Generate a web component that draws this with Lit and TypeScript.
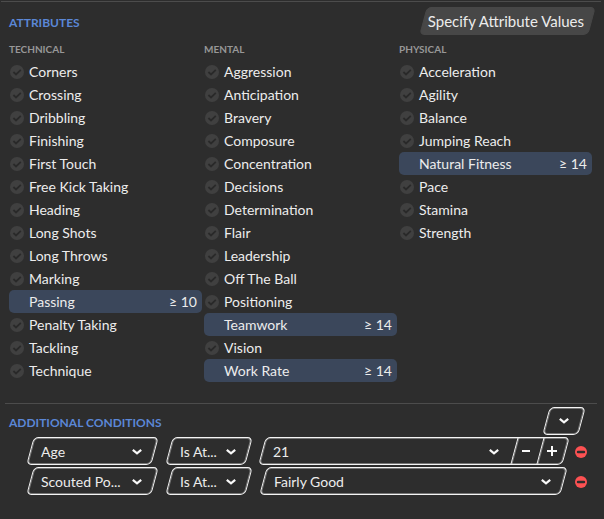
import { LitElement, html, css, svg } from "lit";
import { customElement, property } from "lit/decorators.js";
import { classMap } from "lit/directives/class-map.js";

interface Attribute {
  name: string;
  min?: number;
}

interface Group {
  title: string;
  items: Attribute[];
}

interface Condition {
  field: string;
  operator: string;
  value: string;
  stepper: boolean;
}

const list = (names: string[], picked: Record<string, number> = {}): Attribute[] =>
  names.map((name) => ({ name, min: picked[name] }));

const GROUPS: Group[] = [
  {
    title: "TECHNICAL",
    items: list(
      ["Corners", "Crossing", "Dribbling", "Finishing", "First Touch", "Free Kick Taking", "Heading",
        "Long Shots", "Long Throws", "Marking", "Passing", "Penalty Taking", "Tackling", "Technique"],
      { Passing: 10 }
    ),
  },
  {
    title: "MENTAL",
    items: list(
      ["Aggression", "Anticipation", "Bravery", "Composure", "Concentration", "Decisions", "Determination",
        "Flair", "Leadership", "Off The Ball", "Positioning", "Teamwork", "Vision", "Work Rate"],
      { Teamwork: 14, "Work Rate": 14 }
    ),
  },
  {
    title: "PHYSICAL",
    items: list(
      ["Acceleration", "Agility", "Balance", "Jumping Reach", "Natural Fitness", "Pace", "Stamina", "Strength"],
      { "Natural Fitness": 14 }
    ),
  },
];

const CONDITIONS: Condition[] = [
  { field: "Age", operator: "Is At...", value: "21", stepper: true },
  { field: "Scouted Po...", operator: "Is At...", value: "Fairly Good", stepper: false },
];

const chevron = html`<svg class="chevron" width="10" height="6" viewBox="0 0 10 6" aria-hidden="true">
  ${svg`<path d="M0.8 0.9 L5 4.4 L9.2 0.9" fill="none" stroke="#f8f8f8" stroke-width="2.2"/>`}
</svg>`;

@customElement("attribute-row")
class AttributeRow extends LitElement {
  @property({ attribute: false }) item!: Attribute;

  static styles = css`
    :host { display: block; }
    .row {
      display: flex;
      align-items: center;
      height: 23px;
      padding: 0 5px 0 1px;
      border-radius: 5px;
      box-sizing: border-box;
    }
    .row.on { background: #3b475b; }
    .tick { position: relative; display: flex; width: 14px; height: 14px; margin-right: 5px; }
    .box { appearance: none; width: 14px; height: 14px; margin: 0; border-radius: 50%; background: #404040; }
    .mark { position: absolute; inset: 0; pointer-events: none; }
    .on .tick { visibility: hidden; }
    .name { flex: 1; }
  `;

  render() {
    const on = this.item.min !== undefined;
    return html`<label class=${classMap({ row: true, on })}>
      <span class="tick">
        <input class="box" type="checkbox" .checked=${on} />
        <svg class="mark" width="14" height="14" viewBox="0 0 14 14" aria-hidden="true">
          <path d="M3.4 7 L6 9.4 L10.8 4.8" fill="none" stroke="#292929" stroke-width="1.8" />
        </svg>
      </span>
      <span class="name">${this.item.name}</span>
      ${on ? html`<span>≥ ${this.item.min}</span>` : null}
    </label>`;
  }
}

@customElement("pick-list")
class PickList extends LitElement {
  @property() label = "";
  @property() value = "";

  static styles = css`
    :host { display: block; position: relative; height: 28px; min-width: 0; }
    .select {
      appearance: none;
      display: block;
      width: 100%;
      height: 28px;
      margin: 0;
      padding: 2px 26px 0 11px;
      border: 0;
      background: none;
      color: inherit;
      font: inherit;
      outline: none;
    }
    .chevron { position: absolute; right: 13px; top: 12px; pointer-events: none; }
  `;

  render() {
    return html`<select class="select" aria-label=${this.label}><option>${this.value}</option></select>${chevron}`;
  }
}

@customElement("app-root")
class AppRoot extends LitElement {
  static styles = css`
    :host {
      display: block;
      min-height: 100vh;
      box-sizing: border-box;
      padding-top: 1px;
      background: #2d2d2d;
      color: #ececec;
      font: 14px/20px Lato, "Open Sans", sans-serif;
    }
    .rule { height: 1px; margin: 0 3px 0 1px; background: #4c4c4c; }
    .rule.inner { margin: 21px 7px 0 5px; }
    .head { display: flex; align-items: center; justify-content: space-between; padding-left: 9px; }
    .head.attributes { padding-top: 5px; padding-right: 12px; }
    .head.conditions { padding-top: 3px; padding-right: 22px; }
    .title { margin: 4px 0 0; font-size: 12px; line-height: 16px; font-weight: 700; color: #5b87d6; }
    .slant { position: relative; height: 28px; isolation: isolate; }
    .slant::before {
      content: "";
      position: absolute;
      inset: 0;
      z-index: -1;
      box-sizing: border-box;
      border-radius: 5px;
      transform: skewX(-15deg);
      border: 1px solid #f4f4f4;
      box-shadow: inset 0 0 0 1px rgba(255, 255, 255, 0.35);
      pointer-events: none;
    }
    .button { padding: 0; border: 0; background: none; color: inherit; font: inherit; }
    .specify { padding: 0 8px 0 5px; font-size: 15px; }
    .specify::before { border-color: #474747; background: #474747; box-shadow: none; }
    .add { display: flex; align-items: center; justify-content: center; width: 36px; }
    .columns { display: grid; grid-template-columns: repeat(3, 1fr); gap: 2px; padding: 6px 12px 0 9px; }
    .group { margin: 0; padding: 0; list-style: none; }
    .caption { margin: 0 0 3px; font-size: 10px; line-height: 16px; font-weight: 700; color: #979797; }
    .list { display: grid; gap: 2px; padding: 2px 17px 0 30px; }
    .condition { display: flex; align-items: center; }
    .field { width: 125px; margin-right: 14px; }
    .operator { width: 80px; margin-right: 14px; }
    .value { flex: 1; display: flex; margin-right: 11px; min-width: 0; }
    .value.stepper { margin-left: -1px; margin-right: 9px; }
    .choice { flex: 1; }
    .stepper .choice { margin-right: 2px; }
    .step {
      position: relative;
      display: flex;
      align-items: center;
      justify-content: center;
      box-sizing: border-box;
      width: 26px;
      height: 28px;
      padding-right: 2px;
    }
    .step::before {
      content: "";
      position: absolute;
      inset: 0;
      border-left: 1px solid #f4f4f4;
      box-shadow: inset 1px 0 0 rgba(255, 255, 255, 0.35);
      transform: skewX(-15deg);
      pointer-events: none;
    }
    .remove { display: flex; padding-top: 2px; }
  `;

  private condition(c: Condition) {
    return html`<div class="condition">
      <div class="slant field"><pick-list label="Condition" .value=${c.field}></pick-list></div>
      <div class="slant operator"><pick-list label="Operator" .value=${c.operator}></pick-list></div>
      <div class=${classMap({ slant: true, value: true, stepper: c.stepper })}>
        <pick-list class="choice" label="Value" .value=${c.value}></pick-list>
        ${c.stepper
          ? html`<button class="button step" aria-label="Decrease">
                <svg width="10" height="10" viewBox="0 0 10 10"><path d="M1 5H9" stroke="#f8f8f8" stroke-width="2" /></svg>
              </button>
              <button class="button step" aria-label="Increase">
                <svg width="10" height="10" viewBox="0 0 10 10"><path d="M0 5H10M5 0V10" stroke="#f8f8f8" stroke-width="2" /></svg>
              </button>`
          : null}
      </div>
      <button class="button remove" aria-label="Remove condition">
        <svg width="12" height="12" viewBox="0 0 12 12">
          <circle cx="6" cy="6" r="6" fill="#fc5152" />
          <rect x="1.8" y="4.8" width="8.4" height="2.4" rx="1.2" fill="#2d2d2d" />
        </svg>
      </button>
    </div>`;
  }

  render() {
    return html`
      <div class="rule"></div>
      <section>
        <div class="head attributes">
          <h2 class="title">ATTRIBUTES</h2>
          <button class="button slant specify">Specify Attribute Values</button>
        </div>
        <div class="columns">
          ${GROUPS.map(
            (g) => html`<div>
              <h3 class="caption">${g.title}</h3>
              <ul class="group">
                ${g.items.map((item) => html`<li><attribute-row .item=${item}></attribute-row></li>`)}
              </ul>
            </div>`
          )}
        </div>
      </section>
      <div class="rule inner"></div>
      <section>
        <div class="head conditions">
          <h2 class="title">ADDITIONAL CONDITIONS</h2>
          <button class="button slant add" aria-label="Add condition">${chevron}</button>
        </div>
        <div class="list">${CONDITIONS.map((c) => this.condition(c))}</div>
      </section>
    `;
  }
}
